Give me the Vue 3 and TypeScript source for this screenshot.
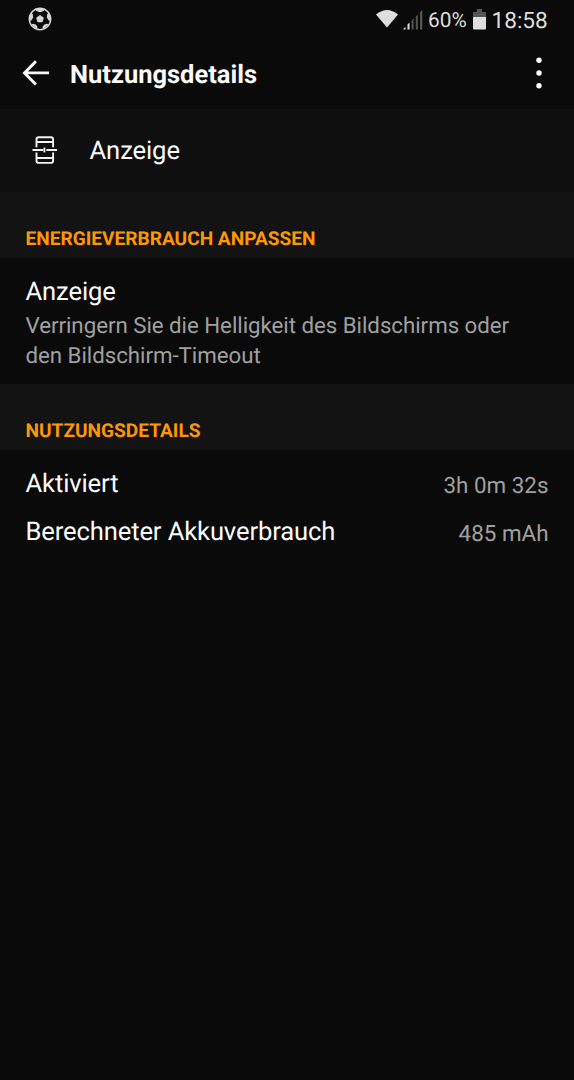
<script setup lang="ts">
interface UsageEntry {
  label: string
  value: string
}

const usage: UsageEntry[] = [
  { label: 'Aktiviert', value: '3h 0m 32s' },
  { label: 'Berechneter Akkuverbrauch', value: '485 mAh' },
]
</script>

<template>
  <div class="screen">
    <div class="status">
      <svg class="ball" width="24" height="24" viewBox="0 0 24 24">
        <circle cx="12" cy="12" r="10.700" fill="none" stroke="#d6d6d6" stroke-width="1.500" />
        <g fill="#d6d6d6">
          <path d="M12 8 15.800 10.800 14.400 15.200H9.600L8.200 10.800z" />
          <path d="M7 2.300 12 1.200 17 2.300 15.200 4.200 12 5.300 8.800 4.200z" />
          <path d="M22.800 9.500 22.600 14 20.500 13.200 18.800 10.500 19.300 7.200 20.500 5.500z" />
          <path d="M1.200 9.500 1.400 14 3.500 13.200 5.200 10.500 4.700 7.200 3.500 5.500z" />
          <path d="M20.600 17.500 15 22.300 14.600 19.800 16.300 17.500 19 16.700z" />
          <path d="M3.400 17.500 9 22.300 9.400 19.800 7.700 17.500 5 16.700z" />
        </g>
      </svg>
      <svg class="wifi" width="22" height="18" viewBox="0 0 22 18">
        <path d="M0 4.500Q11-4.500 22 4.500L11 17.500z" fill="#dedede" />
      </svg>
      <svg class="signal" width="21" height="20" viewBox="0 0 21 20">
        <path d="M.5 19.500v-1l2-1.500v2.500zM4.500 19.500v-5l2-2v7z" fill="#e2e2e2" />
        <path d="M8.600 19.500v-9l2-2v11zM12.800 19.500v-13l2-2v15zM17 19.500v-17.300l2.300-2.100v19.400z" fill="#555" />
      </svg>
      <span class="percent">60%</span>
      <svg class="battery" width="13" height="21" viewBox="0 0 13 21">
        <path d="M4 0h5v3h4v5H0V3h4z" fill="#555" />
        <path d="M0 8h13v11.500q0 1-1 1H1q-1 0-1-1z" fill="#dedede" />
      </svg>
      <span class="clock">18:58</span>
    </div>

    <header class="toolbar">
      <svg class="back" width="28" height="28" viewBox="0 0 28 28">
        <path d="M14.900 2.300 3.500 13.900 14.900 25.500M3.500 13.900H28" fill="none" stroke="#fafafa" stroke-width="2.900" />
      </svg>
      <h1 class="title">Nutzungsdetails</h1>
      <svg class="more" width="8" height="32" viewBox="0 0 8 32" fill="#fff">
        <circle cx="4" cy="3.200" r="2.700" />
        <circle cx="4" cy="16" r="2.700" />
        <circle cx="4" cy="28.700" r="2.700" />
      </svg>
    </header>

    <div class="subject">
      <svg class="device" width="26" height="30" viewBox="0 0 26 30" fill="none" stroke="#f4f4f4" stroke-width="1.900">
        <path d="M4.500 12.300V4.500Q4.500 2.300 6.700 2.300H18.900Q21.100 2.300 21.100 4.500V12.300M4.500 17.500V25.700Q4.500 27.900 6.700 27.900H18.900Q21.100 27.900 21.100 25.700V17.500" />
        <path d="M4.500 7H21.100M4.500 23H21.100M.5 15H11.200M14.400 15H25.100" />
        <path d="M12.400 12.600V17.400" />
      </svg>
      <span class="subject-name">Anzeige</span>
    </div>

    <h2 class="category">ENERGIEVERBRAUCH ANPASSEN</h2>
    <section class="setting">
      <div class="label">Anzeige</div>
      <p class="summary">Verringern Sie die Helligkeit des Bildschirms oder den Bildschirm-Timeout</p>
    </section>

    <h2 class="category">NUTZUNGSDETAILS</h2>
    <section class="usage">
      <div v-for="entry in usage" :key="entry.label" class="entry">
        <span class="label">{{ entry.label }}</span>
        <span class="value">{{ entry.value }}</span>
      </div>
    </section>
  </div>
</template>

<style>
body {
  margin: 0;
  background: #0a0a0a;
}
</style>

<style scoped>
.screen {
  box-sizing: border-box;
  width: 100%;
  height: 1080px;
  overflow: hidden;
  background: #0a0a0a;
  color: #fafafa;
  font-family: Roboto, "Liberation Sans", sans-serif;
  text-rendering: geometricPrecision;
}
svg {
  display: block;
  flex: none;
}
.status {
  display: flex;
  align-items: center;
  height: 40px;
  padding: 0 26px 0 28px;
  box-sizing: border-box;
  color: #dedede;
  white-space: nowrap;
}
.ball {
  margin: -2px auto 0 0;
}
.wifi {
  margin: -2px 5px 0 0;
}
.signal {
  margin: -1px 4px 0 0;
}
.percent {
  width: 45px;
  padding-top: 1px;
  font-size: 20.8px;
}
.battery {
  margin: -1px 5.5px 0 0;
}
.clock {
  width: 56.5px;
  font-size: 22.6px;
}
.toolbar {
  display: flex;
  align-items: center;
  height: 69px;
  padding: 0 31px 0 21px;
  box-sizing: border-box;
}
.back {
  margin: -4px 21px 0 0;
}
.title {
  flex: 1;
  margin: 0;
  font-size: 25.5px;
  font-weight: 700;
}
.more {
  margin-top: -3px;
}
.subject {
  display: flex;
  align-items: center;
  height: 83px;
  padding-left: 32px;
  box-sizing: border-box;
  background: #0f0f0f;
}
.device {
  margin-top: -2px;
}
.subject-name {
  margin-left: 31.5px;
  font-size: 25.6px;
  letter-spacing: -0.1px;
}
.category {
  height: 66px;
  margin: 0;
  padding: 37px 25.5px 0;
  box-sizing: border-box;
  background: #131313;
  color: #ff9800;
  font-size: 19.1px;
  font-weight: 700;
  line-height: 20px;
}
.setting {
  height: 126px;
  padding: 18px 25.5px 0;
  box-sizing: border-box;
}
.label {
  font-size: 25.6px;
  letter-spacing: -0.13px;
  line-height: 32px;
}
.summary {
  margin: 3px 0 0;
  color: #a0a0a0;
  font-size: 22.3px;
  letter-spacing: -0.04px;
  line-height: 30px;
}
.usage {
  padding: 9px 25.5px 0;
}
.entry {
  display: flex;
  align-items: flex-start;
  justify-content: space-between;
  height: 39px;
  padding-top: 9px;
}
.value {
  padding-top: 3px;
  color: #a0a0a0;
  font-size: 22.4px;
  line-height: 30px;
}
</style>
